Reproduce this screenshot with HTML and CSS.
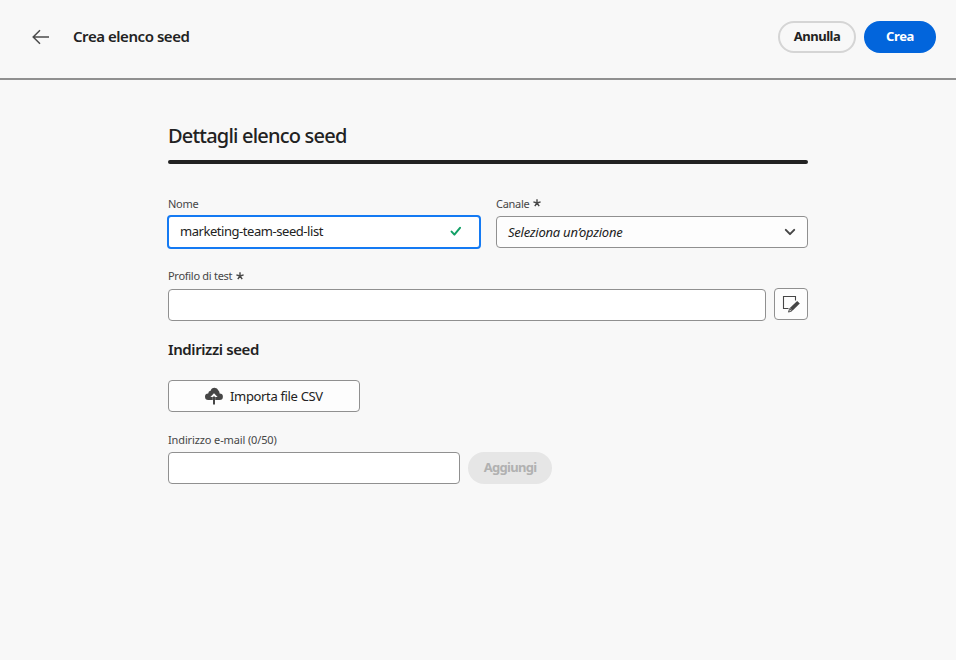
FILE: index.html
```html
<!DOCTYPE html>
<html lang="it">
<head>
<meta charset="utf-8">
<title>Crea elenco seed</title>
<link rel="stylesheet" href="styles.css">
</head>
<body>
<header class="topbar">
  <button class="back" aria-label="Indietro"><svg width="18" height="16" viewBox="0 0 18 16"><path d="M17 8H1.2M8 1.2L1.2 8L8 14.8" fill="none" stroke="#4b4b4b" stroke-width="1.5"/></svg></button>
  <h1><span class="t-title">Crea elenco seed</span></h1>
  <button class="pill outline"><span class="t-cancel">Annulla</span></button>
  <button class="pill primary"><span class="t-create">Crea</span></button>
</header>
<main class="form">
  <h2><span class="t-heading">Dettagli elenco seed</span></h2>
  <div class="rule"></div>
  <div class="row two">
    <div class="field">
      <label><span class="t-name">Nome</span></label>
      <div class="box focused"><span class="t-value">marketing-team-seed-list</span>
        <svg class="check" width="12" height="10" viewBox="0 0 12 10"><path d="M1.6 5.6L4.4 8.6L10 1.8" fill="none" stroke="#12a066" stroke-width="2" stroke-linecap="round" stroke-linejoin="round"/></svg>
      </div>
    </div>
    <div class="field">
      <label><span class="t-channel">Canale</span><svg class="star" width="8" height="8" viewBox="0 0 8 8"><path d="M4 4V.2M4 4L.4 2.9M4 4L7.6 2.9M4 4L1.8 7.2M4 4L6.2 7.2" stroke="#464646" stroke-width="1.4"/></svg></label>
      <div class="box select"><span class="t-placeholder">Seleziona un’opzione</span>
        <svg class="chevron" width="12" height="8" viewBox="0 0 12 8"><path d="M1.8 1.9L6 6.1L10.2 1.9" fill="none" stroke="#464646" stroke-width="2" stroke-linecap="round" stroke-linejoin="round"/></svg>
      </div>
    </div>
  </div>
  <div class="row profile">
    <div class="field">
      <label><span class="t-profile">Profilo di test</span><svg class="star" width="8" height="8" viewBox="0 0 8 8"><path d="M4 4V.2M4 4L.4 2.9M4 4L7.6 2.9M4 4L1.8 7.2M4 4L6.2 7.2" stroke="#464646" stroke-width="1.4"/></svg></label>
      <div class="box"></div>
    </div>
    <button class="edit" aria-label="Modifica"><svg width="18" height="18" viewBox="0 0 18 18"><path d="M6.5 13.5H1.5V1.5H13.5V5.5" fill="none" stroke="#464646" stroke-width="1.1"/><path d="M15.2 5.9L17.8 8.5L10.4 15.7L7.8 13.1Z" fill="#464646"/><path d="M7.6 13.6L9.9 15.9L6.5 17.1Z" fill="#c8c8c8" stroke="#464646" stroke-width=".9"/></svg></button>
  </div>
  <h3><span class="t-addresses">Indirizzi seed</span></h3>
  <button class="import"><svg width="18" height="18" viewBox="0 0 18 18"><path d="M3.4 13A3.3 3.3 0 0 1 3.2 6.4A3 3 0 0 1 5.6 3.8A4.1 4.1 0 0 1 13.4 3.6A3.4 3.4 0 0 1 14.6 6.4A3.3 3.3 0 0 1 14.6 13H10.2V10H12.6L9 6.2L5.4 10H7.8V13Z" fill="#464646"/><path d="M8 9.5H10V17.5H8Z" fill="#464646"/></svg><span class="t-import">Importa file CSV</span></button>
  <div class="row email">
    <div class="field">
      <label><span class="t-email">Indirizzo e-mail (0/50)</span></label>
      <div class="box"></div>
    </div>
    <button class="pill disabled" disabled><span class="t-add">Aggiungi</span></button>
  </div>
</main>
</body>
</html>
```
FILE: styles.css
```css
* { box-sizing: border-box; }
body { margin: 0; min-height: 660px; background: #f8f8f8; color: #222; font-family: "Noto Sans", sans-serif; font-size: 13px; }
h1, h2, h3 { margin: 0; font-weight: 600; white-space: nowrap; }
button { margin: 0; padding: 0; font: inherit; color: inherit; }
svg { display: block; flex: none; }
.topbar { display: flex; align-items: center; height: 80px; padding: 0 20px 4px 32px; border-bottom: 2px solid #909090; }
.back { border: 0; background: none; width: 41px; }
h1 { flex: 1; font-size: 15px; line-height: 20px; padding-bottom: 2px; }
.pill { display: flex; align-items: center; justify-content: center; height: 32px; padding-bottom: 2px; border: 0; border-radius: 16px; font-weight: 700; }
.outline { width: 78px; border: 2px solid #d5d5d5; background: transparent; margin-right: 8px; }
.primary { width: 72px; background: #0265dc; color: #fff; }
.disabled { width: 84px; background: #e6e6e6; color: #b1b1b1; }
.form { width: 640px; margin-left: 168px; padding-top: 42px; }
h2 { font-size: 20px; line-height: 28px; font-weight: 500; }
.rule { height: 4px; margin-top: 10px; border-radius: 2px; background: #222; }
.row { display: flex; align-items: flex-end; }
.two { margin-top: 29px; gap: 16px; }
.field { flex: 1; min-width: 0; }
label { display: flex; align-items: center; height: 20px; margin-bottom: 3px; font-size: 11px; color: #464646; white-space: nowrap; }
.star { margin-left: 4px; }
.box { display: flex; align-items: center; height: 32px; padding: 0 11px; border: 1px solid #909090; border-radius: 4px; background: #fff; white-space: nowrap; }
.focused { height: 34px; margin: -1px -1px; border: 2px solid #147af3; padding-bottom: 2px; }
.check { margin-left: auto; margin-right: 6px; }
.select { background: #fdfdfd; font-style: italic; }
.chevron { margin-left: auto; }
.profile { margin-top: 18px; gap: 8px; }
.profile label { height: 19px; margin-bottom: 4px; }
.edit { display: flex; align-items: center; justify-content: center; width: 34px; height: 32px; margin-bottom: 1px; border: 1px solid #909090; border-radius: 4px; background: #fdfdfd; }
h3 { margin-top: 18px; font-size: 15px; line-height: 20px; }
.import { display: flex; align-items: center; gap: 7px; width: 192px; height: 32px; margin-top: 21px; padding-left: 36px; border: 1px solid #909090; border-radius: 4px; background: #fdfdfd; }
.email { margin-top: 17px; gap: 8px; }
.email .field { flex: 0 0 292px; }
.t-title { letter-spacing: -.45px; }
.t-cancel { letter-spacing: -.5px; }
.t-create { letter-spacing: -.35px; }
.t-heading { letter-spacing: -.8px; }
.t-value { letter-spacing: -.45px; }
.t-name, .t-channel, .t-profile { letter-spacing: -.28px; }
.t-placeholder { letter-spacing: -.24px; }
.t-addresses { letter-spacing: -.4px; }
.t-import { letter-spacing: -.34px; }
.t-email { letter-spacing: -.13px; }
.t-add { letter-spacing: -.7px; }
```
